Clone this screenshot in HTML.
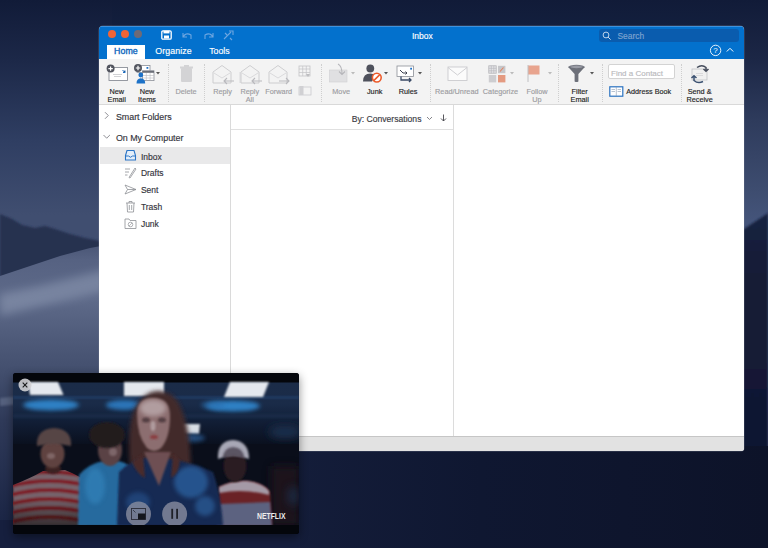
<!DOCTYPE html>
<html><head><meta charset="utf-8">
<style>
*{margin:0;padding:0;box-sizing:border-box}
html,body{width:768px;height:548px;overflow:hidden;background:#0d142c;font-family:"Liberation Sans",sans-serif;position:relative}
.a{position:absolute}
.t{position:absolute;line-height:1;white-space:nowrap;-webkit-text-stroke:0.15px currentColor}
svg{overflow:visible}
</style></head><body>
<svg id="desk" style="position:absolute;left:0;top:0" width="768" height="548" viewBox="0 0 768 548">
<defs>
<linearGradient id="sky" x1="0" y1="0" x2="0" y2="548" gradientUnits="userSpaceOnUse">
<stop offset="0" stop-color="#111b38"/>
<stop offset="0.1095" stop-color="#1c2848"/>
<stop offset="0.2555" stop-color="#2f3e62"/>
<stop offset="0.3923" stop-color="#404e70"/>
<stop offset="1.0000" stop-color="#404e70"/>
</linearGradient>
<linearGradient id="dune" x1="0" y1="0" x2="0" y2="548" gradientUnits="userSpaceOnUse">
<stop offset="0.4471" stop-color="#4a5676"/>
<stop offset="0.4745" stop-color="#566282"/>
<stop offset="0.5474" stop-color="#5e6a89"/>
<stop offset="0.6204" stop-color="#4e5a79"/>
<stop offset="0.6861" stop-color="#414d6c"/>
<stop offset="0.7664" stop-color="#2f3a59"/>
<stop offset="1.0000" stop-color="#162040"/>
</linearGradient>
<linearGradient id="rsky" x1="0" y1="0" x2="0" y2="548" gradientUnits="userSpaceOnUse">
<stop offset="0" stop-color="#111b38"/>
<stop offset="0.1095" stop-color="#1c2746"/>
<stop offset="0.2190" stop-color="#2e3b5c"/>
<stop offset="0.3500" stop-color="#3e4d70"/>
<stop offset="0.4015" stop-color="#44547a"/>
<stop offset="1.0000" stop-color="#44547a"/>
</linearGradient>
<linearGradient id="bot" x1="290" y1="0" x2="768" y2="0" gradientUnits="userSpaceOnUse">
<stop offset="0" stop-color="#141d3a"/>
<stop offset="0.4" stop-color="#0f1731"/>
<stop offset="1" stop-color="#0d1329"/>
</linearGradient>
<filter id="bl" x="-20%" y="-50%" width="140%" height="200%"><feGaussianBlur stdDeviation="4"/></filter>
<filter id="bl2"><feGaussianBlur stdDeviation="1"/></filter>
</defs>
<linearGradient id="base" x1="0" y1="0" x2="0" y2="1"><stop offset="0" stop-color="#111b38"/><stop offset="0.06" stop-color="#13203f"/><stop offset="0.5" stop-color="#16203d"/><stop offset="0.82" stop-color="#0f1630"/><stop offset="1" stop-color="#0d1329"/></linearGradient><rect x="0" y="0" width="768" height="548" fill="url(#base)"/>
<rect x="0" y="0" width="112" height="548" fill="url(#sky)"/>
<rect x="730" y="0" width="38" height="548" fill="url(#rsky)"/>
<path d="M0 214 L12 219 L22 225 L35 228 L45 226 L55 229 L70 234 L85 238 L100 241 L112 242 L112 300 L0 300 Z" fill="#253050" filter="url(#bl2)"/>
<path d="M0 276 L30 266 L60 256 L90 248 L112 244 L112 548 L0 548 Z" fill="url(#dune)"/>
<path d="M0 294 L40 286 L112 268 L112 290 L40 306 L0 316 Z" fill="#8a96b0" opacity="0.6" filter="url(#bl)"/>
<path d="M0 398 L20 396 L20 404 L0 406 Z" fill="#6a7692" opacity="0.6" filter="url(#bl2)"/>
<linearGradient id="rmt" x1="0" y1="0" x2="0" y2="1"><stop offset="0" stop-color="#1a2442"/><stop offset="0.15" stop-color="#141c37"/><stop offset="1" stop-color="#0f1630"/></linearGradient><path d="M730 232 L744 229 L768 213 L768 548 L730 548 Z" fill="url(#rmt)" filter="url(#bl2)"/>
<rect x="290" y="446" width="478" height="102" fill="url(#bot)"/>
<rect x="0" y="520" width="300" height="28" fill="#161f3e"/>
</svg>

<div class="a" style="left:99px;top:26px;width:645px;height:425px;background:#fff;border-radius:4px 4px 3px 3px;box-shadow:0 0 0 0.5px rgba(120,130,150,.5)"></div>
<div class="a" style="left:99px;top:26px;width:645px;height:33px;background:#0371cd;border-radius:4px 4px 0 0"></div>
<div class="a" style="left:101px;top:26px;width:641px;height:1px;background:#3f92dc"></div>
<div class="a" style="left:108px;top:30.3px;width:8px;height:8px;background:#ef6436;border-radius:50%"></div>
<div class="a" style="left:121px;top:30.3px;width:8px;height:8px;background:#ef6436;border-radius:50%"></div>
<div class="a" style="left:134px;top:30.3px;width:8px;height:8px;background:#6e6a76;border-radius:50%"></div>
<svg class="a" style="left:161px;top:30px;" width="11" height="10" viewBox="0 0 11 10"><rect x="0.8" y="0.8" width="9.4" height="8.4" rx="1.2" fill="none" stroke="#fff" stroke-width="1.3"/><rect x="2.5" y="0.8" width="6" height="2.6" fill="#fff"/><rect x="3" y="5.5" width="5" height="3" fill="#fff"/></svg>
<svg class="a" style="left:181px;top:31px;" width="12" height="9" viewBox="0 0 12 9"><path d="M2 2 L2 6 L6 6 M2 6 Q5 1 10 4 L10 8" fill="none" stroke="#6ea6e0" stroke-width="1.1"/></svg>
<svg class="a" style="left:203px;top:31px;" width="12" height="9" viewBox="0 0 12 9"><path d="M10 2 L10 6 L6 6 M10 6 Q7 1 2 4 L2 8" fill="none" stroke="#6ea6e0" stroke-width="1.1"/></svg>
<svg class="a" style="left:222px;top:29px;" width="13" height="12" viewBox="0 0 13 12"><path d="M2 10 L9 3 M7 2 L11 2 L11 6 M3 4 L5 6 M8 9 L10 11" fill="none" stroke="#6ea6e0" stroke-width="1.1"/></svg>
<div class="t" style="left:411.90px;top:32.10px;font-size:8.5px;color:#ffffff;font-weight:normal;letter-spacing:0px;">Inbox</div>
<div class="a" style="left:599.4px;top:29.3px;width:139.6px;height:12.5px;background:#0a5cae;border-radius:3px"></div>
<svg class="a" style="left:602px;top:30.5px;" width="10" height="10" viewBox="0 0 10 10"><circle cx="4" cy="4" r="2.9" fill="none" stroke="#d0e0f2" stroke-width="0.9"/><path d="M6.1 6.1 L8.6 8.6" stroke="#d0e0f2" stroke-width="1"/></svg>
<div class="t" style="left:617.50px;top:31.99px;font-size:8.4px;color:#7ea4d0;font-weight:normal;letter-spacing:0px;">Search</div>
<div class="a" style="left:107px;top:45px;width:38px;height:14px;background:#fff"></div>
<div class="t" style="left:114.00px;top:47.15px;font-size:8.8px;color:#0e66bd;font-weight:normal;letter-spacing:0.1px;-webkit-text-stroke:0.35px #0e66bd">Home</div>
<div class="t" style="left:155.30px;top:47.15px;font-size:8.8px;color:#ffffff;font-weight:normal;letter-spacing:0.1px;">Organize</div>
<div class="t" style="left:209.20px;top:47.15px;font-size:8.8px;color:#ffffff;font-weight:normal;letter-spacing:0px;">Tools</div>
<svg class="a" style="left:709px;top:44px;" width="14" height="13" viewBox="0 0 14 13"><circle cx="6.6" cy="6.4" r="5.2" fill="none" stroke="#fff" stroke-width="0.9"/><text x="6.6" y="9.4" text-anchor="middle" font-family="Liberation Sans" font-size="8" fill="#fff">?</text></svg>
<svg class="a" style="left:725px;top:46px;" width="10" height="8" viewBox="0 0 10 8"><path d="M1.8 5.5 L5 2.3 L8.2 5.5" fill="none" stroke="#fff" stroke-width="1"/></svg>
<div class="a" style="left:99px;top:59px;width:645px;height:46px;background:#f3f3f3;border-bottom:1px solid #d9d9d9"></div>
<div class="a" style="left:168.4px;top:64px;width:1px;height:38px;border-left:1px dotted #cfcfcf"></div>
<div class="a" style="left:204.4px;top:64px;width:1px;height:38px;border-left:1px dotted #cfcfcf"></div>
<div class="a" style="left:320.6px;top:64px;width:1px;height:38px;border-left:1px dotted #cfcfcf"></div>
<div class="a" style="left:429.7px;top:64px;width:1px;height:38px;border-left:1px dotted #cfcfcf"></div>
<div class="a" style="left:558.3px;top:64px;width:1px;height:38px;border-left:1px dotted #cfcfcf"></div>
<div class="a" style="left:601.6px;top:64px;width:1px;height:38px;border-left:1px dotted #cfcfcf"></div>
<div class="a" style="left:680.5px;top:64px;width:1px;height:38px;border-left:1px dotted #cfcfcf"></div>
<div class="t" style="left:16.70px;width:200px;text-align:center;top:87.92px;font-size:7.3px;color:#1f1f26;font-weight:normal;letter-spacing:0px;">New</div>
<div class="t" style="left:16.70px;width:200px;text-align:center;top:95.62px;font-size:7.3px;color:#1f1f26;font-weight:normal;letter-spacing:0px;">Email</div>
<div class="t" style="left:47.00px;width:200px;text-align:center;top:87.92px;font-size:7.3px;color:#1f1f26;font-weight:normal;letter-spacing:0px;">New</div>
<div class="t" style="left:47.00px;width:200px;text-align:center;top:95.62px;font-size:7.3px;color:#1f1f26;font-weight:normal;letter-spacing:0px;">Items</div>
<div class="t" style="left:86.00px;width:200px;text-align:center;top:87.92px;font-size:7.3px;color:#9d9da2;font-weight:normal;letter-spacing:0px;">Delete</div>
<div class="t" style="left:122.50px;width:200px;text-align:center;top:87.92px;font-size:7.3px;color:#9d9da2;font-weight:normal;letter-spacing:0px;">Reply</div>
<div class="t" style="left:149.80px;width:200px;text-align:center;top:87.92px;font-size:7.3px;color:#9d9da2;font-weight:normal;letter-spacing:0px;">Reply</div>
<div class="t" style="left:149.80px;width:200px;text-align:center;top:95.62px;font-size:7.3px;color:#9d9da2;font-weight:normal;letter-spacing:0px;">All</div>
<div class="t" style="left:178.75px;width:200px;text-align:center;top:87.92px;font-size:7.3px;color:#9d9da2;font-weight:normal;letter-spacing:0px;">Forward</div>
<div class="t" style="left:241.20px;width:200px;text-align:center;top:87.92px;font-size:7.3px;color:#9d9da2;font-weight:normal;letter-spacing:0px;">Move</div>
<div class="t" style="left:274.70px;width:200px;text-align:center;top:87.92px;font-size:7.3px;color:#1f1f26;font-weight:normal;letter-spacing:0px;">Junk</div>
<div class="t" style="left:308.10px;width:200px;text-align:center;top:87.92px;font-size:7.3px;color:#1f1f26;font-weight:normal;letter-spacing:0px;">Rules</div>
<div class="t" style="left:356.80px;width:200px;text-align:center;top:87.92px;font-size:7.3px;color:#9d9da2;font-weight:normal;letter-spacing:0px;">Read/Unread</div>
<div class="t" style="left:400.50px;width:200px;text-align:center;top:87.92px;font-size:7.3px;color:#9d9da2;font-weight:normal;letter-spacing:0px;">Categorize</div>
<div class="t" style="left:437.00px;width:200px;text-align:center;top:87.92px;font-size:7.3px;color:#9d9da2;font-weight:normal;letter-spacing:0px;">Follow</div>
<div class="t" style="left:437.00px;width:200px;text-align:center;top:95.62px;font-size:7.3px;color:#9d9da2;font-weight:normal;letter-spacing:0px;">Up</div>
<div class="t" style="left:479.70px;width:200px;text-align:center;top:87.92px;font-size:7.3px;color:#1f1f26;font-weight:normal;letter-spacing:0px;">Filter</div>
<div class="t" style="left:479.70px;width:200px;text-align:center;top:95.62px;font-size:7.3px;color:#1f1f26;font-weight:normal;letter-spacing:0px;">Email</div>
<div class="t" style="left:599.60px;width:200px;text-align:center;top:87.92px;font-size:7.3px;color:#1f1f26;font-weight:normal;letter-spacing:0px;">Send &amp;</div>
<div class="t" style="left:599.60px;width:200px;text-align:center;top:95.62px;font-size:7.3px;color:#1f1f26;font-weight:normal;letter-spacing:0px;">Receive</div>
<div class="t" style="left:626.30px;top:88.11px;font-size:7.2px;color:#1f1f26;font-weight:normal;letter-spacing:0px;">Address Book</div>
<div class="a" style="left:607.5px;top:64.2px;width:67px;height:15.2px;background:#fff;border:1px solid #d3d3d3;border-radius:2px"></div>
<div class="t" style="left:611.00px;top:69.63px;font-size:8.0px;color:#b9b9bd;font-weight:normal;letter-spacing:0px;">Find a Contact</div>
<svg class="a" style="left:156.3px;top:72px;" width="4" height="3" viewBox="0 0 4 3"><path d="M0 0 L4 0 L2 2.6 Z" fill="#555"/></svg>
<svg class="a" style="left:350.7px;top:72px;" width="4" height="3" viewBox="0 0 4 3"><path d="M0 0 L4 0 L2 2.6 Z" fill="#bbb"/></svg>
<svg class="a" style="left:384.2px;top:72px;" width="4" height="3" viewBox="0 0 4 3"><path d="M0 0 L4 0 L2 2.6 Z" fill="#555"/></svg>
<svg class="a" style="left:417.5px;top:72px;" width="4" height="3" viewBox="0 0 4 3"><path d="M0 0 L4 0 L2 2.6 Z" fill="#555"/></svg>
<svg class="a" style="left:509.9px;top:72px;" width="4" height="3" viewBox="0 0 4 3"><path d="M0 0 L4 0 L2 2.6 Z" fill="#bbb"/></svg>
<svg class="a" style="left:547.7px;top:72px;" width="4" height="3" viewBox="0 0 4 3"><path d="M0 0 L4 0 L2 2.6 Z" fill="#bbb"/></svg>
<svg class="a" style="left:590.3px;top:72px;" width="4" height="3" viewBox="0 0 4 3"><path d="M0 0 L4 0 L2 2.6 Z" fill="#555"/></svg>
<svg class="a" style="left:106px;top:64px;" width="23" height="18" viewBox="0 0 23 18"><rect x="3" y="3.5" width="18.5" height="13" fill="#fff" stroke="#8b8f98" stroke-width="0.9"/><path d="M7 10.5 L16 10.5 M8 12.5 L15 12.5" stroke="#c6c8cc" stroke-width="0.8"/><path d="M16.5 6 L19 8.5 M19 6.5 L19 8.5 L17 8.5" stroke="#1d6fc4" stroke-width="1"/><circle cx="4.6" cy="4.6" r="4" fill="#51545e"/><path d="M2.4 4.6 L6.8 4.6 M4.6 2.4 L4.6 6.8" stroke="#fff" stroke-width="1.2"/></svg>
<svg class="a" style="left:133px;top:64px;" width="24" height="21" viewBox="0 0 24 21"><rect x="4" y="1.5" width="13" height="7" fill="#fff" stroke="#8b8f98" stroke-width="0.8"/><rect x="13.5" y="3" width="1.8" height="1.8" fill="#1d6fc4"/><rect x="9.5" y="6.8" width="11.5" height="9.8" fill="#fff" stroke="#8b8f98" stroke-width="0.8"/><rect x="9.5" y="6.8" width="11.5" height="2" fill="#6b6f78"/><path d="M9.5 11.5 L21 11.5 M9.5 14 L21 14 M13.3 9 L13.3 16.6 M17.1 9 L17.1 16.6" stroke="#b8bac0" stroke-width="0.6"/><circle cx="5" cy="4" r="4" fill="#51545e"/><path d="M2.8 4 L7.2 4 M5 1.8 L5 6.2" stroke="#fff" stroke-width="1.2"/><circle cx="7.8" cy="11" r="2.4" fill="#1d72c8"/><path d="M3.5 19.5 Q3.5 14.5 7.8 14.2 Q12.2 14.5 12.2 19.5 Z" fill="#1d72c8"/></svg>
<svg class="a" style="left:178px;top:64px;" width="17" height="19" viewBox="0 0 17 19"><rect x="3" y="4" width="11" height="14" rx="1" fill="#d3d3d5"/><rect x="2" y="2.5" width="13" height="2" fill="#d3d3d5"/><rect x="6" y="1" width="5" height="2" fill="#d3d3d5"/></svg>
<svg class="a" style="left:212px;top:63.5px;" width="24" height="22" viewBox="0 0 24 22"><path d="M1 8 L10 1.5 L19 8 L19 19 L1 19 Z" fill="none" stroke="#c9c9cc" stroke-width="0.9"/><path d="M2 9 L10 14 L18 9" fill="none" stroke="#d3d3d6" stroke-width="0.8"/><path d="M22 17 L12 17 M15 14 L12 17 L15 20" fill="none" stroke="#b9b9bd" stroke-width="1.1"/></svg>
<svg class="a" style="left:238.5px;top:64.5px;" width="3" height="19" viewBox="0 0 3 19"><path d="M1 7 L1 18" stroke="#d3d3d6" stroke-width="0.8"/></svg>
<svg class="a" style="left:240px;top:63.5px;" width="24" height="22" viewBox="0 0 24 22"><path d="M1 8 L10 1.5 L19 8 L19 19 L1 19 Z" fill="none" stroke="#c9c9cc" stroke-width="0.9"/><path d="M2 9 L10 14 L18 9" fill="none" stroke="#d3d3d6" stroke-width="0.8"/><path d="M22 17 L12 17 M15 14 L12 17 L15 20" fill="none" stroke="#b9b9bd" stroke-width="1.1"/></svg>
<svg class="a" style="left:268px;top:63.5px;" width="24" height="22" viewBox="0 0 24 22"><path d="M1 8 L10 1.5 L19 8 L19 19 L1 19 Z" fill="none" stroke="#c9c9cc" stroke-width="0.9"/><path d="M2 9 L10 14 L18 9" fill="none" stroke="#d3d3d6" stroke-width="0.8"/><path d="M11 17 L21 17 M18 14 L21 17 L18 20" fill="none" stroke="#b9b9bd" stroke-width="1.1"/></svg>
<svg class="a" style="left:298px;top:65px;" width="14" height="13" viewBox="0 0 14 13"><rect x="1" y="1" width="11" height="10" fill="none" stroke="#c3c3c6" stroke-width="0.8"/><path d="M1 4 L12 4 M1 7.5 L12 7.5 M4.7 1 L4.7 11 M8.3 1 L8.3 11" stroke="#c3c3c6" stroke-width="0.7"/><path d="M8 9 L10 12 L12 9 Z" fill="#bdbdc0"/></svg>
<svg class="a" style="left:298px;top:85px;" width="14" height="11" viewBox="0 0 14 11"><rect x="1" y="2" width="12" height="8" fill="none" stroke="#c9c9cc" stroke-width="0.8"/><rect x="1.5" y="1" width="4" height="9" fill="#d0d0d3"/></svg>
<svg class="a" style="left:328px;top:63px;" width="21" height="21" viewBox="0 0 21 21"><rect x="1.5" y="7" width="17.5" height="12" fill="#e0e0e2" stroke="#cfcfd2" stroke-width="0.6"/><path d="M10 1 Q14 3 14 11 M11 8.5 L14 11.5 L17 8.5" fill="none" stroke="#b6b6ba" stroke-width="1.1"/></svg>
<svg class="a" style="left:362px;top:64px;" width="21" height="20" viewBox="0 0 21 20"><circle cx="8.3" cy="4.5" r="3.9" fill="#4e515c"/><path d="M1 17.5 Q1 9.5 8.3 9.5 Q12 9.5 13 12 L10 17.5 Z" fill="#4e515c"/><circle cx="14.8" cy="13.6" r="4.4" fill="#fff" stroke="#ec5a2a" stroke-width="1.6"/><path d="M11.8 16.6 L17.8 10.6" stroke="#ec5a2a" stroke-width="1.5"/></svg>
<svg class="a" style="left:396px;top:64px;" width="20" height="20" viewBox="0 0 20 20"><rect x="1" y="2" width="16.5" height="10.5" fill="#fff" stroke="#8c8f97" stroke-width="0.8"/><rect x="14.2" y="3.8" width="1.8" height="1.8" fill="#1d6fc4"/><path d="M4 6 L7 9 L11 9 M9.5 7.5 L11 9 L9.5 10.5" fill="none" stroke="#3d4250" stroke-width="1"/><path d="M5 12.5 L5 16 L15 16 M13 14 L15 16 L13 18" fill="none" stroke="#3a4a66" stroke-width="1.3"/></svg>
<svg class="a" style="left:447px;top:66px;" width="22" height="16" viewBox="0 0 22 16"><rect x="1" y="1" width="19" height="13.5" fill="#fbfbfb" stroke="#cbcbce" stroke-width="0.9"/><path d="M1 1.5 L10.5 9 L20 1.5" fill="none" stroke="#cbcbce" stroke-width="0.9"/></svg>
<svg class="a" style="left:488px;top:65px;" width="19" height="18" viewBox="0 0 19 18"><rect x="0.8" y="0.8" width="7.4" height="7.4" fill="#e4e4e6" stroke="#b4b4b8" stroke-width="0.8"/><path d="M0.8 3.3 L8.2 3.3 M0.8 5.8 L8.2 5.8 M3.3 0.8 L3.3 8.2 M5.8 0.8 L5.8 8.2" stroke="#b4b4b8" stroke-width="0.6"/><rect x="10" y="0.8" width="7.4" height="7.4" fill="#c6c6c9"/><path d="M12 6.5 L15.5 2.5" stroke="#e2805e" stroke-width="1.1"/><rect x="0.8" y="10" width="7.4" height="7.4" fill="#cdcdd0"/><rect x="10" y="10" width="7.4" height="7.4" fill="#e49a80"/></svg>
<svg class="a" style="left:527px;top:64px;" width="14" height="19" viewBox="0 0 14 19"><rect x="1" y="1.5" width="11.5" height="9" fill="#e8a48e"/><path d="M1 1 L1 18" stroke="#c0c0c3" stroke-width="1"/></svg>
<svg class="a" style="left:567px;top:64px;" width="20" height="19" viewBox="0 0 20 19"><ellipse cx="9.5" cy="3" rx="8.3" ry="2.2" fill="#7b7e88"/><path d="M1.2 3 L7.6 10 L7.6 17.5 Q9.5 18.5 11.4 17.5 L11.4 10 L17.8 3 Z" fill="#6d7079"/><ellipse cx="9.5" cy="3" rx="6" ry="1.2" fill="#9a9ca5"/></svg>
<svg class="a" style="left:609px;top:86px;" width="15" height="11" viewBox="0 0 15 11"><rect x="0.8" y="0.8" width="13" height="9.4" fill="#fff" stroke="#2a72c0" stroke-width="1.2"/><path d="M7.3 1 L7.3 10 M2.5 3.5 L6 3.5 M2.5 5.5 L6 5.5 M8.6 3.5 L12 3.5 M8.6 5.5 L12 5.5" stroke="#8a9ab0" stroke-width="0.6"/></svg>
<svg class="a" style="left:689px;top:63px;" width="22" height="21" viewBox="0 0 22 21"><rect x="3" y="6" width="15" height="11" fill="#f0f0f0" stroke="#c0c2c6" stroke-width="0.8"/><path d="M7 10.5 L14 10.5 M7 12.5 L14 12.5" stroke="#d0d0d3" stroke-width="0.7"/><path d="M8 4.5 Q13 1 17 4.5 L17 8 M14.5 6 L17 8.3 L19.5 6" fill="none" stroke="#444b5a" stroke-width="1.5"/><path d="M14 18.5 Q9 21 5 17.5 L5 13 M2.5 15 L5 12.7 L7.5 15" fill="none" stroke="#3a5070" stroke-width="1.5"/></svg>
<div class="a" style="left:230px;top:105px;width:1px;height:331px;background:#dadada"></div>
<div class="a" style="left:453px;top:105px;width:1px;height:331px;background:#dcdcdc"></div>
<div class="a" style="left:231px;top:128.5px;width:222px;height:1px;background:#e0e0e0"></div>
<svg class="a" style="left:103px;top:111px;" width="7" height="9" viewBox="0 0 7 9"><path d="M2 1.2 L5.3 4.5 L2 7.8" fill="none" stroke="#8f8f95" stroke-width="1"/></svg>
<svg class="a" style="left:102px;top:133px;" width="9" height="7" viewBox="0 0 9 7"><path d="M1.5 2 L4.7 5.2 L7.9 2" fill="none" stroke="#8f8f95" stroke-width="1"/></svg>
<div class="t" style="left:115.90px;top:112.67px;font-size:8.9px;color:#34343c;font-weight:normal;letter-spacing:0px;">Smart Folders</div>
<div class="t" style="left:115.90px;top:133.57px;font-size:8.9px;color:#34343c;font-weight:normal;letter-spacing:0px;">On My Computer</div>
<div class="a" style="left:100px;top:147px;width:130px;height:17px;background:#e9e9ea"></div>
<div class="t" style="left:140.90px;top:152.50px;font-size:8.5px;color:#34343c;font-weight:normal;letter-spacing:0px;">Inbox</div>
<div class="t" style="left:140.90px;top:169.40px;font-size:8.5px;color:#34343c;font-weight:normal;letter-spacing:0px;">Drafts</div>
<div class="t" style="left:140.90px;top:186.30px;font-size:8.5px;color:#34343c;font-weight:normal;letter-spacing:0px;">Sent</div>
<div class="t" style="left:140.90px;top:203.20px;font-size:8.5px;color:#34343c;font-weight:normal;letter-spacing:0px;">Trash</div>
<div class="t" style="left:140.90px;top:220.10px;font-size:8.5px;color:#34343c;font-weight:normal;letter-spacing:0px;">Junk</div>
<svg class="a" style="left:124px;top:149px;" width="13" height="13" viewBox="0 0 13 13"><path d="M1.5 6.5 L3 1.5 L10 1.5 L11.5 6.5 L11.5 11 L1.5 11 Z" fill="#e3eefa" stroke="#2a74c6" stroke-width="1.1"/><path d="M1.5 7 L4.5 7 Q6.5 9.5 8.5 7 L11.5 7" fill="none" stroke="#2a74c6" stroke-width="1"/></svg>
<svg class="a" style="left:124px;top:166px;" width="13" height="13" viewBox="0 0 13 13"><path d="M1 3 L6 3 M1 6 L5 6 M1 9 L3.5 9 M5 11.5 L11 2 L12 3 L6 12 Z" fill="none" stroke="#8e9096" stroke-width="0.8"/></svg>
<svg class="a" style="left:124px;top:183px;" width="13" height="13" viewBox="0 0 13 13"><path d="M1 2 L12 6.5 L1 11 L3.5 6.5 Z M3.5 6.5 L12 6.5" fill="none" stroke="#8e9096" stroke-width="0.8"/></svg>
<svg class="a" style="left:124px;top:200px;" width="13" height="13" viewBox="0 0 13 13"><path d="M2 3 L11 3 M5 3 L5 1.5 L8 1.5 L8 3 M3 3 L3.5 12 L9.5 12 L10 3 M5.3 5 L5.3 10 M7.7 5 L7.7 10" fill="none" stroke="#8e9096" stroke-width="0.8"/></svg>
<svg class="a" style="left:124px;top:217px;" width="13" height="13" viewBox="0 0 13 13"><path d="M1 2 L5 2 L6 3.5 L12 3.5 L12 11.5 L1 11.5 Z" fill="none" stroke="#8e9096" stroke-width="0.8"/><circle cx="6.5" cy="7.5" r="2.3" fill="none" stroke="#8e9096" stroke-width="0.7"/><path d="M5 9 L8 6" stroke="#8e9096" stroke-width="0.6"/></svg>
<div class="t" style="left:351.70px;top:114.92px;font-size:8.6px;color:#3c3c44;font-weight:normal;letter-spacing:0px;">By: Conversations</div>
<svg class="a" style="left:426px;top:116px;" width="7" height="5" viewBox="0 0 7 5"><path d="M1 1 L3.5 3.5 L6 1" fill="none" stroke="#77777d" stroke-width="0.9"/></svg>
<svg class="a" style="left:440px;top:114px;" width="7" height="8" viewBox="0 0 7 8"><path d="M3.5 0.5 L3.5 7 M1 4.5 L3.5 7 L6 4.5" fill="none" stroke="#45454c" stroke-width="0.9"/></svg>
<div class="a" style="left:99px;top:436px;width:645px;height:15px;background:#e2e2e2;border-top:1px solid #c6c6c6;border-radius:0 0 3px 3px"></div>
<div id="pip" style="position:absolute;left:13px;top:373px;width:286px;height:161px;background:#04060b;border-radius:3px;overflow:hidden;box-shadow:0 3px 10px rgba(0,0,0,.45)"><svg width="286" height="161" viewBox="0 0 286 161"><g transform="translate(0,1)">
<defs>
<filter id="p1" x="-30%" y="-30%" width="160%" height="160%"><feGaussianBlur stdDeviation="1.3"/></filter>
<filter id="p2" x="-40%" y="-40%" width="180%" height="180%"><feGaussianBlur stdDeviation="2.2"/></filter>
<filter id="p3" x="-50%" y="-50%" width="200%" height="200%"><feGaussianBlur stdDeviation="4"/></filter>
<linearGradient id="ceil" x1="0" y1="0" x2="0" y2="1">
<stop offset="0" stop-color="#1b2c48"/>
<stop offset="0.35" stop-color="#1a2b48"/>
<stop offset="0.6" stop-color="#121f38"/>
<stop offset="1" stop-color="#0a101e"/>
</linearGradient>
<linearGradient id="shade" x1="0" y1="0" x2="0" y2="1">
<stop offset="0" stop-color="#000" stop-opacity="0"/>
<stop offset="0.55" stop-color="#000" stop-opacity="0"/>
<stop offset="1" stop-color="#000" stop-opacity="0.55"/>
</linearGradient>
<clipPath id="dshirt"><path d="M0 152 L0 111 Q18 104 30 97 L52 96 Q64 101 72 106 L74 152 Z"/></clipPath>
</defs>
<rect y="-1" width="286" height="162" fill="#04060b"/>
<rect y="8.5" width="286" height="62" fill="url(#ceil)"/>
<rect y="70" width="286" height="82" fill="#0a0e1a"/>
<rect y="22" width="286" height="3" fill="#24406a" opacity="0.7" filter="url(#p1)"/>
<ellipse cx="38" cy="31" rx="28" ry="5.5" fill="#2f80c4" filter="url(#p2)"/>
<ellipse cx="111" cy="31" rx="18" ry="5" fill="#2a74b8" filter="url(#p2)"/>
<ellipse cx="220" cy="32" rx="27" ry="5.5" fill="#2f80c4" filter="url(#p2)"/>
<rect y="40" width="286" height="4" fill="#1c3050" opacity="0.6" filter="url(#p1)"/>
<ellipse cx="200" cy="31" rx="12" ry="4" fill="#2a70b0" opacity="0.6" filter="url(#p2)"/>
<polygon points="15,8 45,8 50.5,21 17,21" fill="#e4e8ee" filter="url(#p1)"/>
<polygon points="111,8 151,8 151,22 111,22" fill="#e4e8ee" filter="url(#p1)"/>
<polygon points="217,8 256,8 250,23 211,23" fill="#e4e8ee" filter="url(#p1)"/>
<polygon points="168,50 187,50 186,59.7 169,59.7" fill="#d8dde4" filter="url(#p1)"/>
<ellipse cx="178" cy="64" rx="14" ry="4" fill="#2a5a90" opacity="0.8" filter="url(#p2)"/>

<rect x="258" y="92" width="28" height="60" fill="#22161a" opacity="0.8" filter="url(#p3)"/>
<ellipse cx="272" cy="58" rx="16" ry="6" fill="#1e3050" filter="url(#p3)"/>
<ellipse cx="280" cy="122" rx="6" ry="10" fill="#1e3050" opacity="0.7" filter="url(#p3)"/>
<!-- Lucas -->
<path d="M204 152 L206 113 Q220 106 234 107 Q252 109 257 118 L259 152 Z" fill="#6a2228" filter="url(#p1)"/>
<path d="M206 113 Q220 106 234 107 Q250 109 256 117 L256 121 Q230 114 206 119 Z" fill="#a49aa6" filter="url(#p1)"/>
<path d="M206 130 L257 128 L259 152 L204 152 Z" fill="#5c6280" filter="url(#p1)"/>
<ellipse cx="222" cy="92" rx="11.5" ry="16" fill="#2a1c20" filter="url(#p1)"/>
<path d="M205 85 Q204 67 220 66 Q236 67 236 85 Q220 78 205 85 Z" fill="#a8a8b6" filter="url(#p1)"/><path d="M210 84 Q210 74 220 73 Q231 74 231 84 Q220 80 210 84 Z" fill="#3a3040" opacity="0.7" filter="url(#p1)"/>
<!-- Dustin -->
<g clip-path="url(#dshirt)" filter="url(#p1)">
<rect x="0" y="90" width="80" height="62" fill="#76646c"/>
<path d="M-6 104 Q36 92 80 104 M-6 113 Q36 101 80 113 M-6 122 Q36 110 80 122 M-6 131 Q36 119 80 131 M-6 140 Q36 128 80 140 M-6 149 Q36 137 80 149" stroke="#7c1f25" stroke-width="4" fill="none"/>
<rect x="0" y="90" width="80" height="62" fill="url(#shade)"/>
</g>
<ellipse cx="40" cy="95" rx="8" ry="5" fill="#3a2024" filter="url(#p1)"/>
<ellipse cx="39.5" cy="80" rx="12" ry="14" fill="#5e423f" filter="url(#p1)"/>
<path d="M24 72 Q23 55 41 54 Q59 55 58 72 Q41 68 24 72 Z" fill="#574545" filter="url(#p1)"/>
<ellipse cx="38" cy="82" rx="4" ry="3" fill="#9a8486" opacity="0.55" filter="url(#p1)"/>
<!-- Mike -->
<path d="M65 152 L66 101 Q75 90 90 87 L106 87 Q118 90 124 100 L126 152 Z" fill="#286a9e" filter="url(#p1)"/>
<ellipse cx="82" cy="112" rx="10" ry="18" fill="#3586be" opacity="0.6" filter="url(#p2)"/>
<ellipse cx="97" cy="76" rx="12" ry="16" fill="#5a4244" filter="url(#p1)"/>
<ellipse cx="94" cy="61" rx="18" ry="13" fill="#221a1e" filter="url(#p1)"/>
<ellipse cx="100" cy="78" rx="4" ry="4" fill="#a08a8e" opacity="0.5" filter="url(#p1)"/>
<!-- Max -->
<path d="M118 100 Q112 50 124 30 Q134 16 146 17 Q162 18 168 34 Q178 56 178 100 Z" fill="#432a2a" filter="url(#p2)"/>
<path d="M104 152 L106 98 Q120 84 138 83 Q170 84 200 98 Q208 120 210 152 Z" fill="#162a52" filter="url(#p1)"/>
<ellipse cx="178" cy="108" rx="17" ry="16" fill="#2f6aac" opacity="0.65" filter="url(#p2)"/>
<ellipse cx="125" cy="128" rx="12" ry="10" fill="#2a5c9a" opacity="0.5" filter="url(#p2)"/>
<ellipse cx="192" cy="132" rx="10" ry="10" fill="#3474b8" opacity="0.5" filter="url(#p2)"/>
<path d="M119 88 Q124 100 132 104 L130 80 Z M167 86 Q166 100 158 104 L160 80 Z" fill="#4a2c2c" filter="url(#p1)"/>
<path d="M131 78 L158 78 L146 112 Z" fill="#6e5052" filter="url(#p1)"/>
<path d="M124 40 Q124 24 140 24 Q157 24 157 42 Q157 64 148 74 Q141 80 134 74 Q124 62 124 40 Z" fill="#8c6e70" filter="url(#p1)"/>
<ellipse cx="140" cy="34" rx="13" ry="8" fill="#b8a6a8" opacity="0.85" filter="url(#p2)"/>
<ellipse cx="133" cy="46" rx="4" ry="2.5" fill="#3a2a2e" opacity="0.7" filter="url(#p1)"/>
<ellipse cx="149" cy="46" rx="4" ry="2.5" fill="#3a2a2e" opacity="0.7" filter="url(#p1)"/>
<ellipse cx="140" cy="52" rx="2.5" ry="5" fill="#c0b0b2" opacity="0.7" filter="url(#p1)"/>
<ellipse cx="141" cy="63" rx="4" ry="2" fill="#8a3035" opacity="0.8" filter="url(#p1)"/>
<!-- controls -->
<circle cx="125.5" cy="140" r="12.5" fill="#868b9e" opacity="0.82"/>
<circle cx="161.6" cy="140" r="12.5" fill="#868b9e" opacity="0.82"/>
<rect x="118.5" y="134.5" width="14" height="11" fill="none" stroke="#2a2d38" stroke-width="0.9"/>
<rect x="125" y="139.5" width="7.5" height="6" fill="#14161c"/>
<path d="M120 136 L122.5 138.5" stroke="#2a2d38" stroke-width="0.8"/>
<rect x="158.3" y="134.8" width="1.8" height="10" fill="#1e2028"/>
<rect x="163.2" y="134.8" width="1.8" height="10" fill="#1e2028"/>
<text x="244" y="144.6" font-family="Liberation Sans" font-weight="bold" font-size="9.5" fill="#eeeeee" textLength="28.5" lengthAdjust="spacingAndGlyphs">NETFLIX</text>
<rect y="151" width="286" height="12" fill="#04060b"/>
<circle cx="12" cy="11" r="6.5" fill="#cfcfd2" opacity="0.9"/>
<path d="M9.7 8.7 L14.3 13.3 M14.3 8.7 L9.7 13.3" stroke="#1a1a1a" stroke-width="1.1"/>
</g></svg></div>

</body></html>
